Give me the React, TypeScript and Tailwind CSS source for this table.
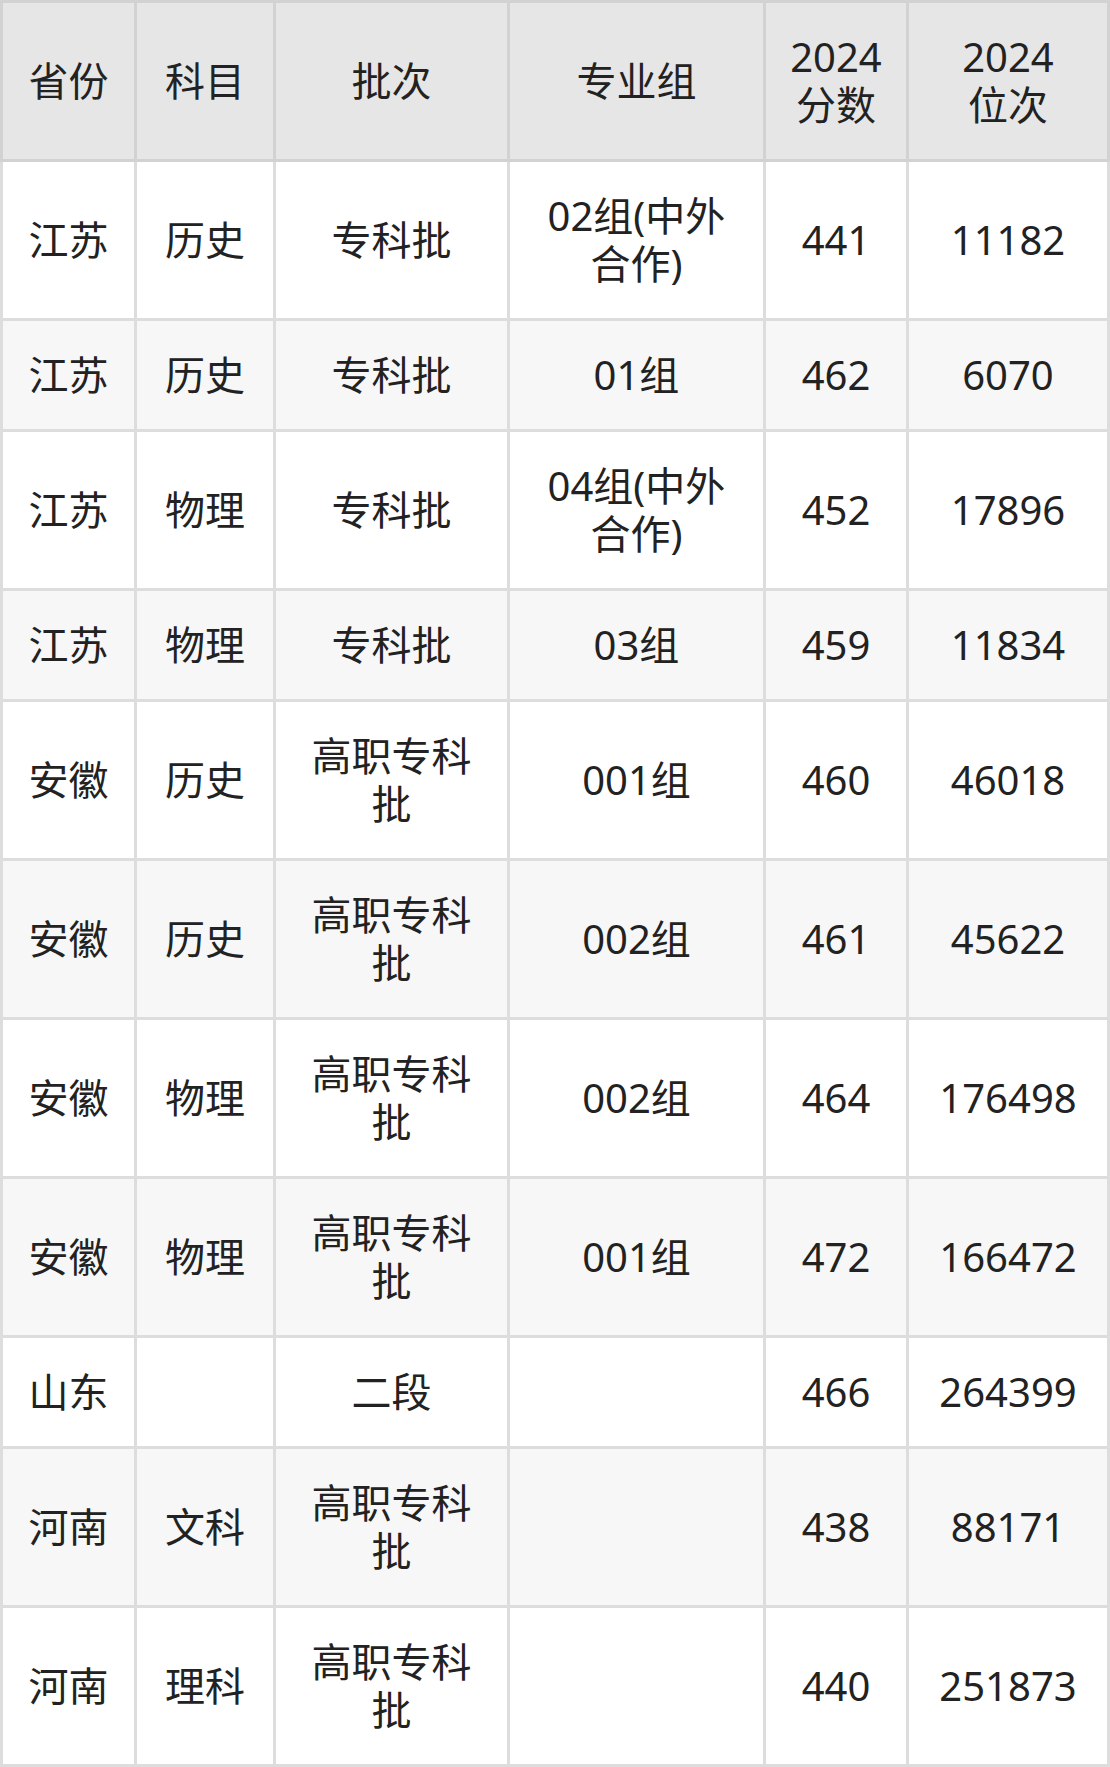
import React from "react";

const rows: string[][] = [
  ["江苏", "历史", "专科批", "02组(中外合作)", "441", "11182"],
  ["江苏", "历史", "专科批", "01组", "462", "6070"],
  ["江苏", "物理", "专科批", "04组(中外合作)", "452", "17896"],
  ["江苏", "物理", "专科批", "03组", "459", "11834"],
  ["安徽", "历史", "高职专科批", "001组", "460", "46018"],
  ["安徽", "历史", "高职专科批", "002组", "461", "45622"],
  ["安徽", "物理", "高职专科批", "002组", "464", "176498"],
  ["安徽", "物理", "高职专科批", "001组", "472", "166472"],
  ["山东", "", "二段", "", "466", "264399"],
  ["河南", "文科", "高职专科批", "", "438", "88171"],
  ["河南", "理科", "高职专科批", "", "440", "251873"],
];

const headers: React.ReactNode[] = [
  "省份",
  "科目",
  "批次",
  "专业组",
  <>
    2024
    <br />
    分数
  </>,
  <>
    2024
    <br />
    位次
  </>,
];

export default function App() {
  return (
    <div
      className="w-[1110px] bg-white text-[#222222]"
      style={{ fontFamily: '"Noto Sans", "Noto Sans CJK SC", sans-serif' }}
    >
      <table className="w-[1110px] table-fixed border-collapse border-[3px] border-[#d2d2d2] text-[40px] leading-[48px]">
        <colgroup>
          <col className="w-[134px]" />
          <col className="w-[139px]" />
          <col className="w-[234px]" />
          <col className="w-[256px]" />
          <col className="w-[143px]" />
          <col className="w-[201px]" />
        </colgroup>
        <thead>
          <tr className="bg-[#e6e6e6]">
            {headers.map((h, i) => (
              <th
                key={i}
                className="border-[3px] border-[#d2d2d2] px-5 py-[30px] text-center font-normal align-middle"
              >
                {h}
              </th>
            ))}
          </tr>
        </thead>
        <tbody>
          {rows.map((r, ri) => (
            <tr key={ri} className={ri % 2 === 0 ? "bg-white" : "bg-[#f7f7f7]"}>
              {r.map((c, ci) => (
                <td
                  key={ci}
                  className="border-[3px] border-[#dddddd] px-5 py-[30px] text-center align-middle"
                >
                  {c}
                </td>
              ))}
            </tr>
          ))}
        </tbody>
      </table>
    </div>
  );
}
